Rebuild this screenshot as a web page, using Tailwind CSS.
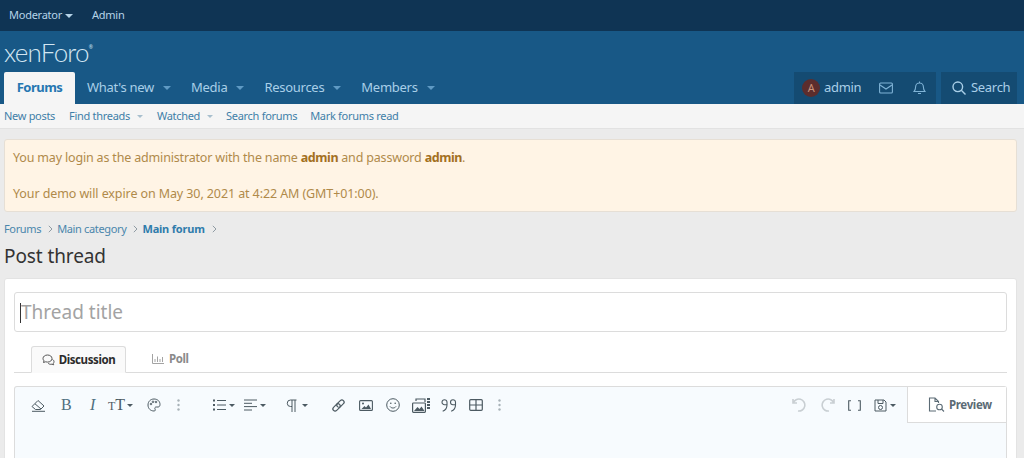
<!DOCTYPE html>
<html lang="en">
  <head>
    <meta charset="UTF-8" />
    <title>Post thread</title>
    <script src="https://cdn.jsdelivr.net/npm/@tailwindcss/browser@4"></script>
  </head>
  <body class="h-[458px] overflow-hidden bg-[#ebebeb] font-['Noto_Sans',sans-serif] text-[13px] text-[#2b2b2b]">
    <!-- Staff bar -->
    <div class="h-[31px] bg-[#0f3454] flex items-center pl-[9px] gap-[19px] text-[11px] tracking-[-0.25px] text-[#b5d3e8]">
      <span class="flex items-center gap-[3px]">Moderator <i class="w-0 h-0 border-x-[4px] border-x-transparent border-t-[4px] border-t-[#b5d3e8]"></i></span>
      <span>Admin</span>
    </div>

    <!-- Header -->
    <div class="h-[41px] bg-[#185886] flex items-center pl-[4px]">
      <span class="font-['Lato',sans-serif] font-light text-[26px] tracking-[-0.8px] text-[#d3e6f2] mt-[2px]">xenForo</span>
      <span class="text-[5px] text-[#d3e6f2] mb-[8px]">®</span>
    </div>

    <!-- Nav -->
    <div class="h-[32px] bg-[#185886] flex justify-between pl-[4px] pr-[7px]">
      <div class="flex text-[13px] tracking-[-0.28px] text-[#a9cfe8]">
        <span class="w-[71px] bg-[#f5f5f5] rounded-t-[2px] flex items-center justify-center font-bold text-[#2577b1] tracking-[-0.5px]">Forums</span>
        <span class="flex items-center ml-[12px] gap-[9px]">What's new <i class="w-0 h-0 border-x-[4px] border-x-transparent border-t-[4px] border-t-[#5f9ac4]"></i></span>
        <span class="flex items-center ml-[20px] gap-[9px]">Media <i class="w-0 h-0 border-x-[4px] border-x-transparent border-t-[4px] border-t-[#5f9ac4]"></i></span>
        <span class="flex items-center ml-[20px] gap-[9px]">Resources <i class="w-0 h-0 border-x-[4px] border-x-transparent border-t-[4px] border-t-[#5f9ac4]"></i></span>
        <span class="flex items-center ml-[20px] gap-[9px]">Members <i class="w-0 h-0 border-x-[4px] border-x-transparent border-t-[4px] border-t-[#5f9ac4]"></i></span>
      </div>
      <div class="flex gap-[5px] text-[13px] tracking-[-0.3px] text-[#a9cfe8]">
        <div class="w-[142px] bg-[#144b72] flex items-center pl-[8px]">
          <span class="w-[18px] h-[18px] rounded-full bg-[#5c2d2d] text-[#c9927a] text-[11px] flex items-center justify-center">A</span>
          <span class="ml-[4px]">admin</span>
          <svg class="ml-[18px]" width="14" height="12" viewBox="0 0 14 12" fill="none" stroke="#7fb3d6" stroke-width="1.1"><rect x="0.6" y="1" width="12.8" height="10" rx="1"/><path d="M1 3l6 4 6-4"/></svg>
          <svg class="ml-[20px]" width="13" height="14" viewBox="0 0 13 14" fill="none" stroke="#7fb3d6" stroke-width="1.1"><path d="M1 10.5h11c-1.3-1.4-1.600-2.600-1.600-4.500 0-2.200-1.700-4-3.900-4S2.600 3.800 2.600 6c0 1.900-.3 3.100-1.600 4.500zM5 12.500h3M6.500 .5V2"/></svg>
        </div>
        <div class="w-[76px] bg-[#144b72] flex items-center pl-[11px] gap-[5px]">
          <svg width="14" height="14" viewBox="0 0 14 14" fill="none" stroke="#a9cfe8" stroke-width="1.4"><circle cx="5.800" cy="5.800" r="4.800"/><path d="M9.300 9.300l4.200 4.200"/></svg>
          <span>Search</span>
        </div>
      </div>
    </div>

    <!-- Sub nav -->
    <div class="h-[25px] pt-[1px] bg-[#f5f5f5] border-b border-[#e2e2e2] flex items-center pl-[4px] text-[11px] tracking-[-0.3px] text-[#3f7fa8]">
      <span>New posts</span>
      <span class="ml-[14px] flex items-center gap-[7px]">Find threads <i class="w-0 h-0 border-x-[3px] border-x-transparent border-t-[3px] border-t-[#a8bfce]"></i></span>
      <span class="ml-[14px] flex items-center gap-[7px]">Watched <i class="w-0 h-0 border-x-[3px] border-x-transparent border-t-[3px] border-t-[#a8bfce]"></i></span>
      <span class="ml-[13px]">Search forums</span>
      <span class="ml-[13px]">Mark forums read</span>
    </div>

    <main class="pl-[4px] pr-[7px]">
      <!-- Notice -->
      <div class="mt-[10px] h-[73px] bg-[#fff4e5] border border-[#e6dfd5] rounded-[3px] pl-[8px] pt-[9px] text-[12.5px] leading-[18px] text-[#b08a4a]">
        <p class="tracking-[-0.17px]">You may login as the administrator with the name <b class="text-[#a3701f] tracking-[-0.4px]">admin</b> and password <b class="text-[#a3701f] tracking-[-0.4px]">admin</b>.</p>
        <p class="mt-[18px] tracking-[-0.1px]">Your demo will expire on May 30, 2021 at 4:22 AM (GMT+01:00).</p>
      </div>

      <!-- Breadcrumb -->
      <div class="mt-[9px] h-[16px] flex items-center text-[11px] tracking-[-0.35px] text-[#4a86ac]">
        <span>Forums</span>
        <svg class="ml-[7px] mr-[4px]" width="5" height="8" viewBox="0 0 5 8" fill="none" stroke="#8f9ba3"><path d="M.8 .8L4 4 .8 7.200"/></svg>
        <span>Main category</span>
        <svg class="ml-[7px] mr-[4px]" width="5" height="8" viewBox="0 0 5 8" fill="none" stroke="#8f9ba3"><path d="M.8 .8L4 4 .8 7.200"/></svg>
        <b class="text-[#2f7cab] tracking-[-0.2px]">Main forum</b>
        <svg class="mx-[7px]" width="5" height="8" viewBox="0 0 5 8" fill="none" stroke="#8f9ba3"><path d="M.8 .8L4 4 .8 7.200"/></svg>
      </div>
      <h1 class="mt-[5px] h-[29px] text-[19px] leading-[29px] tracking-[-0.1px] text-[#333]">Post thread</h1>

      <!-- Card -->
      <div class="mt-[7px] h-[190px] bg-white border border-[#e3e3e3] rounded-t-[3px] px-[9px] pt-[13px]">
        <div class="h-[40px] pt-[1px] border border-[#dcdcdc] rounded-[3px] flex items-center pl-[5px] text-[19px] text-[#a3a3a3]">
          <span class="w-px h-[20px] bg-[#333]"></span>Thread title
        </div>

        <!-- Tabs -->
        <div class="mt-[14px] h-[27px] border-b border-[#dcdcdc] flex pl-[17px] text-[11.5px] font-bold tracking-[-0.4px]">
          <div class="w-[95px] h-[27px] bg-[#fafafa] border border-[#dcdcdc] border-b-[#fafafa] rounded-t-[3px] flex items-center justify-center gap-[4px] text-[#2b2b2b]">
            <svg width="13" height="12" viewBox="0 0 13 12" fill="none" stroke="#555" stroke-width="1"><path d="M5.500 1C3 1 1 2.500 1 4.500c0 .9.400 1.700 1 2.300L1.500 8.500l2-.7c.6.200 1.300.3 2 .3 2.500 0 4.500-1.500 4.500-3.600S8 1 5.500 1z"/><path d="M10.500 5.500c1 .5 1.500 1.300 1.500 2.200 0 .7-.3 1.200-.7 1.700l.4 1.400-1.800-.6c-1.600.4-3-.1-3.800-1"/></svg>
            <span>Discussion</span>
          </div>
          <div class="ml-[26px] flex items-center gap-[5px] text-[#8a8a8a]">
            <svg width="12" height="10" viewBox="0 0 12 10" fill="none" stroke="#a3a3a3"><path d="M.5 0v9.500H12M3 8V5M5.500 8V2.500M8 8V5M10.500 8V3"/></svg>
            <span>Poll</span>
          </div>
        </div>

        <!-- Editor -->
        <div class="mt-[13px] h-[90px] bg-[#f7fbfe] border border-[#dcdcdc] border-b-0 rounded-t-[3px]">
          <div class="flex justify-between h-[36px]">
            <div class="flex items-center text-[#4c5a62]">
              <svg class="ml-[16px]" width="15" height="13" viewBox="0 0 15 13" fill="none" stroke="currentColor" stroke-width="1"><path d="M1 7.500L7 1.500l6 5.500-3.500 3.500H4.500zM4 4.800L10 10M1 12.300h13"/></svg>
              <span class="ml-[15px] w-[12px] text-[16px] font-['Liberation_Serif',serif] text-[#4f6f80]">B</span>
              <span class="ml-[17px] w-[10px] text-[16px] font-['Liberation_Serif',serif] italic text-[#4f6f80]">I</span>
              <span class="ml-[8px] w-[25px] font-['Liberation_Serif',serif] text-[16px] flex items-center gap-[2px]"><span class="text-[12px] mt-[2px]">T</span><span class="-ml-[2px]">T</span><i class="w-0 h-0 border-x-[3px] border-x-transparent border-t-[3px] border-t-[#4c5a62]"></i></span>
              <svg class="ml-[14px]" width="14" height="14" viewBox="0 0 14 14" fill="none" stroke="currentColor" stroke-width="1"><path d="M7 1C3.500 1 1 3.500 1 7s2.500 6 6 6c1.400 0 1.500-1 1-2-.5-1 0-2 1.200-2H11c1.300 0 2-1 2-2.500C13 3.200 10.500 1 7 1z"/><circle cx="4" cy="6" r=".8"/><circle cx="6" cy="3.800" r=".8"/><circle cx="9" cy="4" r=".8"/></svg>
              <svg class="ml-[16px]" width="3" height="12" viewBox="0 0 3 12" fill="#a8b2b8"><circle cx="1.500" cy="1.500" r="1.200"/><circle cx="1.500" cy="6" r="1.200"/><circle cx="1.500" cy="10.500" r="1.200"/></svg>
              <svg class="ml-[33px]" width="13" height="12" viewBox="0 0 13 12" fill="none" stroke="currentColor" stroke-width="1.200"><path d="M4 1.500h9M4 6h9M4 10.500h9"/><path d="M0 1.500h2M0 6h2M0 10.500h2" stroke-width="2"/></svg>
              <i class="ml-[3px] w-0 h-0 border-x-[3px] border-x-transparent border-t-[3px] border-t-[#4c5a62]"></i>
              <svg class="ml-[9px]" width="13" height="12" viewBox="0 0 13 12" fill="none" stroke="currentColor" stroke-width="1"><path d="M0 1h13M0 4.300h8M0 7.600h13M0 11h8"/></svg>
              <i class="ml-[3px] w-0 h-0 border-x-[3px] border-x-transparent border-t-[3px] border-t-[#4c5a62]"></i>
              <svg class="ml-[20px]" width="11" height="13" viewBox="0 0 11 13" fill="none" stroke="currentColor" stroke-width="1"><path d="M10.500 1H4.500a3 3 0 0 0 0 6.500H6M6 1v12M9 1v12"/></svg>
              <i class="ml-[5px] w-0 h-0 border-x-[3px] border-x-transparent border-t-[3px] border-t-[#4c5a62]"></i>
              <svg class="ml-[23px]" width="15" height="15" viewBox="0 0 15 15" fill="none" stroke="currentColor" stroke-width="1.200"><g transform="rotate(-45 7.500 7.500)"><rect x=".5" y="5.300" width="8.500" height="4.400" rx="2.200"/><rect x="6" y="5.300" width="8.500" height="4.400" rx="2.200"/></g></svg>
              <svg class="ml-[13px]" width="14" height="11" viewBox="0 0 14 11" fill="none" stroke="currentColor" stroke-width="1.100"><rect x=".6" y=".6" width="12.800" height="9.800" rx="1"/><path d="M2.500 9l3-3 1.500 1.500 2.500-3 2.500 4.500z" fill="currentColor" stroke="none"/><circle cx="4" cy="3.500" r="1" fill="currentColor" stroke="none"/></svg>
              <svg class="ml-[13px]" width="14" height="14" viewBox="0 0 14 14" fill="none" stroke="currentColor" stroke-width="1"><circle cx="7" cy="7" r="6.300"/><path d="M4 8.500c1.500 2 4.500 2 6 0"/><circle cx="4.800" cy="5.300" r=".8" fill="currentColor" stroke="none"/><circle cx="9.200" cy="5.300" r=".8" fill="currentColor" stroke="none"/></svg>
              <svg class="ml-[12px]" width="18" height="15" viewBox="0 0 18 15" fill="none" stroke="currentColor" stroke-width="1.200"><path d="M4 3V1h9v3"/><rect x=".6" y="5" width="12.800" height="9.400" rx=".8"/><path d="M2 13l3.500-4 2 2 2-2.500 3 4.500z" fill="currentColor" stroke="none"/><path d="M15 1h3M15 4h3M15 7h3M15 10h3" stroke-width="2"/></svg>
              <svg class="ml-[10px]" width="17" height="13" viewBox="0 0 17 13" fill="none" stroke="currentColor" stroke-width="1.100"><path d="M7 3.200a2.500 2.500 0 1 0-2.500 2.500H7V3.200zm0 2.500c0 3.200-1.500 5.500-4.300 6.600M15.500 3.200A2.500 2.500 0 1 0 13 5.700h2.500V3.200zm0 2.500c0 3.200-1.500 5.500-4.300 6.600"/></svg>
              <svg class="ml-[12px]" width="14" height="12" viewBox="0 0 14 12" fill="none" stroke="currentColor" stroke-width="1.200"><rect x=".7" y=".7" width="12.600" height="10.600" rx="1"/><path d="M.7 6h12.600M7 .7v10.600"/></svg>
              <svg class="ml-[15px]" width="3" height="12" viewBox="0 0 3 12" fill="#a8b2b8"><circle cx="1.500" cy="1.500" r="1.200"/><circle cx="1.500" cy="6" r="1.200"/><circle cx="1.500" cy="10.500" r="1.200"/></svg>
            </div>
            <div class="flex items-center text-[#4c5a62]">
              <svg width="15" height="14" viewBox="0 0 15 14" fill="none" stroke="#c9cfd3" stroke-width="1.600"><path d="M1 1v4h4M1.200 5A6 6 0 1 1 6 13"/></svg>
              <svg class="ml-[13px]" width="15" height="14" viewBox="0 0 15 14" fill="none" stroke="#c9cfd3" stroke-width="1.600"><path d="M14 1v4h-4M13.800 5A6 6 0 1 0 9 13"/></svg>
              <svg class="ml-[13px]" width="13" height="11" viewBox="0 0 13 11" fill="none" stroke="currentColor" stroke-width="1.100"><path d="M3 .7H.7v9.600H3M10 .7h2.300v9.600H10"/></svg>
              <svg class="ml-[13px]" width="13" height="13" viewBox="0 0 13 13" fill="none" stroke="currentColor" stroke-width="1"><path d="M1 1h9l2 2v9H1zM4 1v3.500h5V1"/><circle cx="6.500" cy="8.500" r="2"/></svg>
              <i class="ml-[3px] w-0 h-0 border-x-[3px] border-x-transparent border-t-[3px] border-t-[#4c5a62]"></i>
              <div class="ml-[11px] w-[99px] h-[36px] bg-white border-l border-b border-[#dcdcdc] flex items-center pl-[20px] gap-[4px] text-[11.5px] font-bold tracking-[-0.35px] text-[#5b6b75]">
                <svg width="17" height="15" viewBox="0 0 17 15" fill="none" stroke="currentColor" stroke-width="1.100"><path d="M8 14H1.500V1H7l3.500 3.500V6M7 1v3.500h3.500"/><circle cx="11.500" cy="10" r="2.800"/><path d="M13.500 12l2.500 2.500"/></svg>
                <span>Preview</span>
              </div>
            </div>
          </div>
        </div>
      </div>
    </main>
  </body>
</html>
